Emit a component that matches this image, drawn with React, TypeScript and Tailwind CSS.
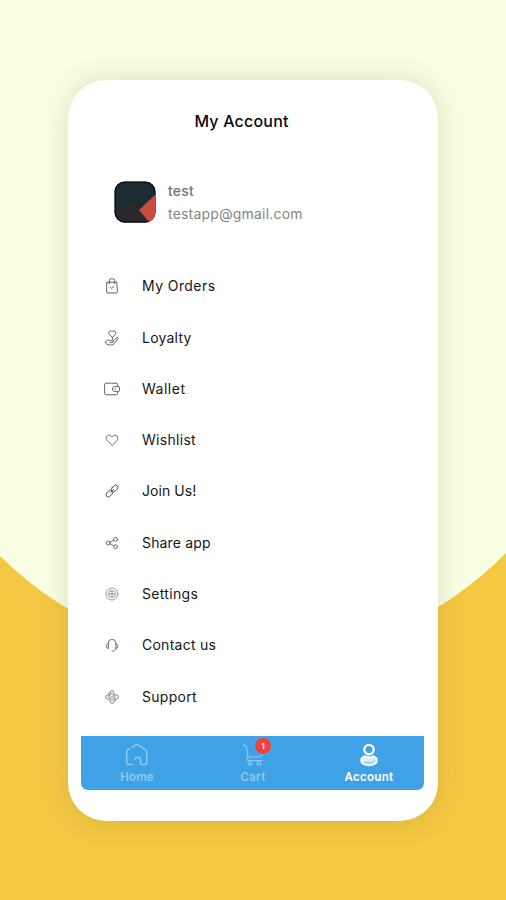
import type { ReactNode } from "react";

const MENU: { label: string; spacing: string; tone: string; icon: ReactNode }[] = [
  {
    label: "My Orders",
    spacing: "tracking-[0.42px]",
    tone: "text-[#4c4c4c]",
    icon: (
      <>
        <path d="M3.2 4.2h9.6l.6 9.2a1.5 1.5 0 0 1-1.5 1.6H4.1a1.5 1.5 0 0 1-1.5-1.6z" />
        <path d="M5.3 5.6V2.7a2 2 0 0 1 2-2h1.4a2 2 0 0 1 2 2v2.9" />
        <path d="m6.2 9.2 1.4 1.3L10 8.3" />
      </>
    ),
  },
  {
    label: "Loyalty",
    spacing: "tracking-[0.22px]",
    tone: "text-[#505050]",
    icon: (
      <>
        <path d="M8.3 7.2 5.3 4.4C3.7 2.4 5.7-.4 8.3 1.6c2.6-2 4.6.8 3 2.8z" />
        <path d="M8.3 7.2v2.5" />
        <path d="M1.4 12.6c1-2.8 3.2-3.1 5.1-1.9h2c1.3.1 1 1.9-.1 1.9H6" />
        <path d="m9.4 11 3.1-3.3c1-.9 2.2.3 1.4 1.3l-3.6 4.5c-1.4 1.6-3.2 1.7-5 1.4-1.7-.3-3.3-.7-3.9-2.3" />
      </>
    ),
  },
  {
    label: "Wallet",
    spacing: "tracking-[0.5px]",
    tone: "text-[#555555]",
    icon: (
      <>
        <path d="M13.6 5V3.8A1.6 1.6 0 0 0 12 2.2H2.2A1.6 1.6 0 0 0 .6 3.8v8.4a1.6 1.6 0 0 0 1.6 1.6H12a1.6 1.6 0 0 0 1.6-1.6V11" />
        <path d="M14.6 5.6h-3.8a2.4 2.4 0 0 0 0 4.8h3.8c.6 0 .9-.4.9-.9v-3c0-.5-.3-.9-.9-.9z" />
        <path d="M11 8h.7" />
      </>
    ),
  },
  {
    label: "Wishlist",
    spacing: "tracking-[0.3px]",
    tone: "text-[#606060]",
    icon: <path d="M8 13.3 2.9 8.2C.4 5.5 3.8.9 8 4.6c4.2-3.7 7.6.9 5.1 3.6z" />,
  },
  {
    label: "Join Us!",
    spacing: "tracking-[0.05px]",
    tone: "text-[#4c4c4c]",
    icon: (
      <>
        <rect x="7" y="3" width="7.4" height="4.6" rx="2.3" transform="rotate(-45 10.7 5.3)" />
        <rect x="1.6" y="8.4" width="7.4" height="4.6" rx="2.3" transform="rotate(-45 5.3 10.7)" />
        <path d="m6.4 9.6 3.2-3.2" />
      </>
    ),
  },
  {
    label: "Share app",
    spacing: "tracking-[0.15px]",
    tone: "text-[#606060]",
    icon: (
      <>
        <circle cx="4.2" cy="8" r="2" />
        <circle cx="11.6" cy="4.3" r="1.9" />
        <circle cx="11.6" cy="11.7" r="1.9" />
        <path d="m6 7.1 3.9-1.9M6 8.9l3.9 1.9" />
      </>
    ),
  },
  {
    label: "Settings",
    spacing: "tracking-[0.32px]",
    tone: "text-[#8c8c8c]",
    icon: (
      <>
        <circle cx="8" cy="8" r="6" />
        <rect x="4.9" y="4.9" width="6.2" height="6.2" rx="1.6" />
        <path d="M8 5v6M5 8h6" />
      </>
    ),
  },
  {
    label: "Contact us",
    spacing: "tracking-[0.25px]",
    tone: "text-[#606060]",
    icon: (
      <>
        <path d="M4.3 11.3V6.2a3.8 3.8 0 0 1 7.6 0v5.1" />
        <path d="M4.3 6.8a2 2 0 0 0-2 2v.7a2 2 0 0 0 2 1.9M11.9 6.8a2 2 0 0 1 1.9 2v.7a2 2 0 0 1-1.9 1.9" />
        <path d="M11.9 11.3c0 1.8-1 2.7-2.6 2.7H8" />
      </>
    ),
  },
  {
    label: "Support",
    spacing: "tracking-[0.3px]",
    tone: "text-[#707070]",
    icon: (
      <>
        <path d="M6 5.3V3.7a2 2 0 0 1 4 0v1.6M6 10.7v1.6a2 2 0 0 0 4 0v-1.6M5.3 6H3.7a2 2 0 0 0 0 4h1.6M10.7 6h1.6a2 2 0 0 1 0 4h-1.6" />
        <path d="m8 4.7 3.3 3.3L8 11.3 4.7 8z" />
        <path d="M6.7 8h2.6M3.9 4.9l1.2-1.2M10.9 12.3l1.2-1.2" />
      </>
    ),
  },
];

function Backdrop() {
  return (
    <svg className="absolute inset-0 -z-10" width="506" height="900" viewBox="0 0 506 900">
      <rect width="506" height="900" fill="#f5c843" />
      <path d="M0 0H506V553A357 357 0 0 1 0 556Z" fill="#f8ffe3" />
    </svg>
  );
}

function Avatar() {
  return (
    <svg width="42" height="42" viewBox="0 0 42 42">
      <defs>
        <clipPath id="avatar-shape">
          <rect x="0.5" y="0.5" width="41" height="41" rx="10" />
        </clipPath>
      </defs>
      <g clipPath="url(#avatar-shape)">
        <rect width="42" height="42" fill="#1d2c32" />
        <path d="M4 42V31L19 21.5 37 42z" fill="#2b282b" />
        <rect x="1" y="1" width="40" height="40" rx="10" fill="none" stroke="#0a1215" strokeWidth="1.6" />
        <path d="M42 13 25 29l11 13h6z" fill="#cb4b42" />
      </g>
    </svg>
  );
}

function HomeIcon() {
  return (
    <svg width="24" height="24" viewBox="0 0 24 24" fill="none" stroke="currentColor" strokeWidth="1.4" strokeLinecap="round" strokeLinejoin="round">
      <path d="M7.5 21.5H4.3A2.6 2.6 0 0 1 1.7 19V9c0-.9.4-1.6 1.1-2.1l1.8-1.2M7.4 4.4l2.7-2.1a3.7 3.7 0 0 1 4 0l6.5 4.5c.8.5 1.2 1.3 1.2 2.2v10a2.6 2.6 0 0 1-2.6 2.6h-2a1.7 1.7 0 0 1-1.7-1.7v-2.7a2.9 2.9 0 0 0-5.7-.8" />
    </svg>
  );
}

function CartIcon() {
  return (
    <svg width="22" height="24" viewBox="0 0 22 24" fill="none" stroke="currentColor" strokeWidth="1.2" strokeLinecap="round" strokeLinejoin="round">
      <path d="M1.2 1.8c2 .1 3.2 1.2 3.5 3L6 13.6l-1.2 2.2c-.4.9.1 1.7 1.1 1.7h14.5" />
      <path d="M6.2 14h10.3c1.9 0 3-1.3 3.7-3.7" />
      <circle cx="8.3" cy="20.3" r="1.8" />
      <circle cx="17" cy="20.3" r="1.8" />
    </svg>
  );
}

function AccountIcon() {
  return (
    <svg width="22" height="24" viewBox="0 0 22 24" fill="none" stroke="currentColor">
      <circle cx="11" cy="6.6" r="4.7" strokeWidth="2.3" />
      <path
        d="M6.8 13.2c2.3 1.4 6.1 1.4 8.4 0 2.2.9 3.7 2.5 3.7 4.4 0 3-3.5 4.7-7.9 4.7s-7.9-1.7-7.9-4.7c0-1.9 1.5-3.5 3.7-4.4z"
        strokeWidth="1.8"
        fill="#d8ecfa"
      />
      <path d="M6 19.5h8.5l2.5-2" stroke="#7cbdec" strokeWidth="0.9" />
    </svg>
  );
}

export default function App() {
  return (
    <div className="relative isolate flex h-[900px] w-[506px] overflow-hidden pt-[80px] pl-[68px] font-['Inter','Liberation_Sans',sans-serif]">
      <Backdrop />
      <main className="flex h-[741px] w-[370px] flex-col rounded-[38px] bg-white shadow-[0_0_28px_rgba(70,80,20,0.17)]">
        <h1 className="mt-[29px] pr-[23px] text-center text-[16px] leading-6 font-medium tracking-[0.2px] text-[#090909]">
          My Account
        </h1>

        <section className="mt-[48px] ml-[46px] flex gap-3">
          <Avatar />
          <div className="text-[14px] leading-6 text-[#747474]">
            <div className="-mt-[2px] font-medium tracking-[0.2px]">test</div>
            <div className="-mt-px tracking-[0.2px] text-[#858585]">testapp@gmail.com</div>
          </div>
        </section>

        <nav className="mt-[34.6px] flex flex-col">
          {MENU.map((item) => (
            <a key={item.label} className="flex h-[51.3px] items-center gap-[22px] pl-9">
              <svg
                className={item.tone}
                width="16"
                height="16"
                viewBox="0 0 16 16"
                fill="none"
                stroke="currentColor"
                strokeWidth="0.9"
                strokeLinecap="round"
                strokeLinejoin="round"
              >
                {item.icon}
              </svg>
              <span className={`text-[14px] leading-5 text-[#161616] ${item.spacing}`}>{item.label}</span>
            </a>
          ))}
        </nav>

        <footer className="mt-auto mr-[14px] mb-[31px] ml-[13px] flex h-[54px] justify-center rounded-b-[7px] bg-[#3fa2e6] pl-px text-[11.5px] font-semibold">
          <div className="flex w-[116px] shrink-0 flex-col items-center pt-[7px] text-[#91c9f2]">
            <HomeIcon />
            <span className="mt-[2px] leading-4 tracking-[0.2px]">Home</span>
          </div>
          <div className="flex w-[116px] shrink-0 flex-col items-center pt-[7px] text-[#91c9f2]">
            <div className="relative">
              <CartIcon />
              <span className="absolute -top-[5px] left-[13px] grid size-4 place-items-center rounded-full bg-[#f3403c] text-[8px] leading-none font-bold text-white">
                1
              </span>
            </div>
            <span className="mt-[2px] leading-4 tracking-[0.4px]">Cart</span>
          </div>
          <div className="flex w-[116px] shrink-0 flex-col items-center pt-[7px] text-white">
            <AccountIcon />
            <span className="mt-[2px] leading-4 tracking-[0.3px]">Account</span>
          </div>
        </footer>
      </main>
    </div>
  );
}
